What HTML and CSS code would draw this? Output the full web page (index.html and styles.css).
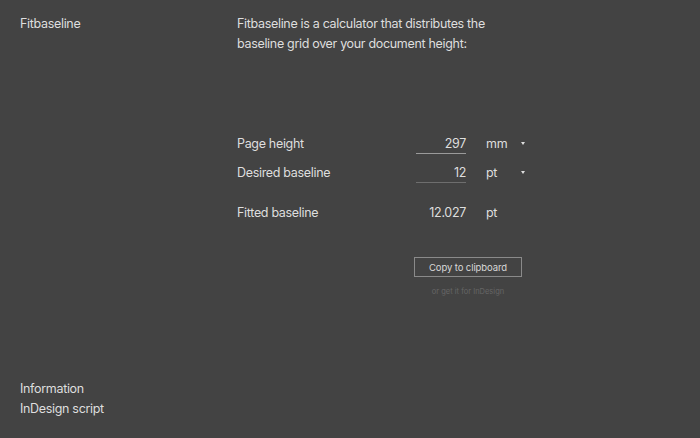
FILE: index.html
```html
<!DOCTYPE html>
<html lang="en">
<head>
<meta charset="utf-8">
<title>Fitbaseline</title>
<link rel="stylesheet" href="styles.css">
</head>
<body>
<div class="page">
  <aside class="sidebar">
    <div class="brand">Fitbaseline</div>
    <nav class="links">
      <a href="#">Information</a>
      <a href="#">InDesign script</a>
    </nav>
  </aside>
  <main class="main">
    <p class="intro">Fitbaseline is a calculator that distributes the<br>baseline grid over your document height:</p>
    <div class="calc">
      <div class="row">
        <span class="label">Page height</span>
        <span class="field">297</span>
        <span class="unit">mm</span>
        <span class="caret"></span>
      </div>
      <div class="row">
        <span class="label">Desired baseline</span>
        <span class="field thin">12</span>
        <span class="unit">pt</span>
        <span class="caret"></span>
      </div>
      <div class="row result">
        <span class="label">Fitted baseline</span>
        <span class="value">12.027</span>
        <span class="unit">pt</span>
      </div>
    </div>
    <div class="actions">
      <button class="copy" type="button">Copy to clipboard</button>
      <a class="get" href="#">or get it for InDesign</a>
    </div>
  </main>
</div>
</body>
</html>
```
FILE: styles.css
```css
html, body {
  margin: 0;
  height: 100%;
  background: #434343;
}

body {
  font-family: Inter, "Noto Sans", sans-serif;
  font-size: 12.5px;
  line-height: 20px;
  color: #dedede;
  letter-spacing: -0.32px;
}

.page {
  display: grid;
  grid-template-columns: 237px 1fr;
  height: 438px;
}

.sidebar {
  display: flex;
  flex-direction: column;
  justify-content: space-between;
  padding: 14px 0 19px 20px;
}

.links {
  display: flex;
  flex-direction: column;
}

.links a {
  color: #dedede;
  text-decoration: none;
}

.main {
  padding-top: 14px;
}

.intro {
  margin: 0;
}

.calc {
  margin-top: 75px;
  display: flex;
  flex-direction: column;
}

.row {
  display: grid;
  grid-template-columns: 179px 50px 20px 35px 10px;
  align-items: center;
  height: 29px;
}

.row.result {
  margin-top: 11px;
}

.field,
.value {
  text-align: right;
}

.field {
  border-bottom: 1px solid #9a9a9a;
  line-height: 18px;
  margin-top: 2px;
}

.field.thin {
  border-bottom-color: #6e6e6e;
}

.unit {
  grid-column: 4;
}

.caret {
  width: 0;
  height: 0;
  border-left: 2.5px solid transparent;
  border-right: 2.5px solid transparent;
  border-top: 3px solid #dedede;
  justify-self: start;
}

.actions {
  margin-top: 30px;
  width: 108px;
  margin-left: 177px;
  display: flex;
  flex-direction: column;
  align-items: center;
}

.copy {
  width: 108px;
  height: 20px;
  padding: 0;
  background: transparent;
  border: 1px solid #8a8a8a;
  color: #d8d8d8;
  font-family: inherit;
  font-size: 9.5px;
  letter-spacing: -0.1px;
}

.get {
  margin-top: 9px;
  font-size: 7.5px;
  line-height: 12px;
  color: #666666;
  text-decoration: none;
  letter-spacing: 0;
}
```
